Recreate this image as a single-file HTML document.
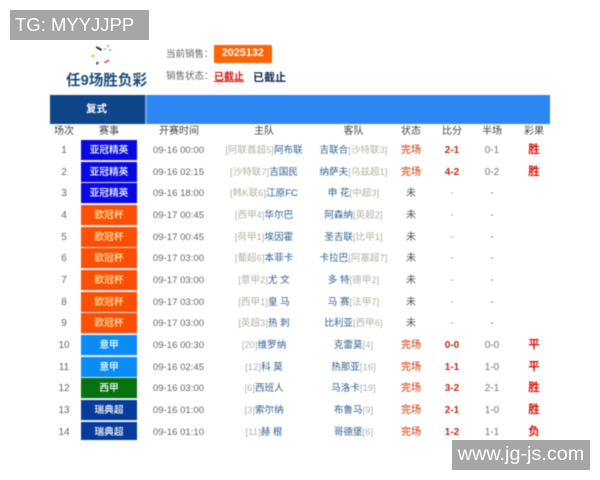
<!DOCTYPE html>
<html lang="zh"><head><meta charset="utf-8"><style>
*{box-sizing:border-box}
html,body{margin:0;padding:0;background:#fff}
body{width:600px;height:480px;position:relative;overflow:hidden;font-family:"Liberation Sans","Noto Sans CJK SC",sans-serif;font-size:10px;color:#555}
.a{position:absolute;white-space:nowrap}
#w{position:absolute;left:0;top:0;width:600px;height:480px;filter:blur(.4px)}
.r{position:absolute;left:50px;width:500px;height:21.67px;line-height:21.67px}
.r span{position:absolute;top:0;text-align:center;white-space:nowrap}
.n{left:0;width:28px;color:#666}
.l{left:31px;width:56px;height:21px;line-height:21px;color:#fff;border-bottom:1px solid #dde;font-size:9.7px;font-weight:500}
.t{left:100.5px;width:56px;font-size:9.6px;color:#666}
.h{left:160px;width:108px;font-size:9.55px}
.g{left:248.5px;width:110px;font-size:9.55px}
.s{left:339px;width:44px}
.c{left:382px;width:40px;font-weight:bold;color:#c22a10}
.b{left:422px;width:40px;color:#777}
.e{left:464px;width:40px;font-weight:bold;color:#d8140c;font-size:11.5px}
i{font-style:normal;color:#b3b3a6}
b{font-weight:normal;color:#2f5f8f}
.f{color:#d8501f;font-weight:500}
.blue{background:#0a0ae0}.or{background:#fb4f05;color:#ffe9a8!important}.sky{background:#0a8cf5}.gr{background:#06710f}.nv{background:#053c9c}
</style></head><body>
<div id="w">
<svg class="a" style="left:88px;top:42px" width="28" height="28" viewBox="0 0 28 28"><path d="M8 4l6 3-1 2-5-3z" fill="#333"/><circle cx="20" cy="4" r="1.5" fill="#ccc"/><circle cx="17" cy="7" r="1" fill="#aaa"/><circle cx="22" cy="8" r="1" fill="#999"/><circle cx="5" cy="14" r="1.6" fill="#f0d050"/><path d="M16 20l5-2.2.7 1-5 2.4z" fill="#e02a20"/><path d="M8 20h3l-2 3.5z" fill="#1a3fb0"/><circle cx="12" cy="14" r=".9" fill="#ddd"/></svg>
<div class="a" style="left:66px;top:72px;font-size:14.6px;line-height:18px;font-weight:bold;color:#1c4b78">任9场胜负彩</div>
<div class="a" style="left:166px;top:47.5px;font-size:9.5px;line-height:14px;color:#666">当前销售：</div>
<div class="a" style="left:213.5px;top:45px;width:58.5px;height:18px;line-height:17.5px;background:#fc6405;color:#fff;font-size:10.8px;font-weight:bold;text-align:center;border-radius:1px">2025132</div>
<div class="a" style="left:166px;top:70px;font-size:9.5px;line-height:14px;color:#666">销售状态：</div>
<div class="a" style="left:214px;top:70.5px;font-size:10px;line-height:14px;font-weight:bold;color:#d8140c;text-decoration:underline">已截止</div>
<div class="a" style="left:253px;top:70.5px;font-size:11px;line-height:14px;font-weight:bold;color:#14284f">已截止</div>

<div class="a" style="left:50px;top:94.5px;width:500px;height:29px;background:#2c87f5"></div>
<div class="a" style="left:50px;top:94.5px;width:95px;height:29px;background:#0f4589;color:#fff;font-weight:bold;font-size:10.5px;line-height:29px;text-align:center;padding-right:2px">复式</div>
<div class="a" style="left:145px;top:94.5px;width:1.5px;height:29px;background:#6fa8ee"></div>

<div class="r" style="top:120.5px;color:#444;line-height:22px">
<span style="left:0;width:28px">场次</span><span style="left:31px;width:56px">赛事</span><span style="left:101px;width:56px">开赛时间</span><span style="left:185px;width:58px">主队</span><span style="left:274.5px;width:58px">客队</span><span class="s">状态</span><span style="left:382px;width:40px">比分</span><span style="left:422px;width:40px">半场</span><span style="left:464px;width:40px">彩果</span></div>

<div class="r" style="top:140px"><span class="n">1</span><span class="l blue">亚冠精英</span><span class="t">09-16 00:00</span><span class="h"><i>[阿联酋超5]</i><b>阿布联</b></span><span class="g"><b>吉联合</b><i>[沙特联3]</i></span><span class="s f">完场</span><span class="c">2-1</span><span class="b">0-1</span><span class="e">胜</span></div>
<div class="r" style="top:161.67px"><span class="n">2</span><span class="l blue">亚冠精英</span><span class="t">09-16 02:15</span><span class="h"><i>[沙特联7]</i><b>吉国民</b></span><span class="g"><b>纳萨夫</b><i>[乌兹超1]</i></span><span class="s f">完场</span><span class="c">4-2</span><span class="b">0-2</span><span class="e">胜</span></div>
<div class="r" style="top:183.33px"><span class="n">3</span><span class="l blue">亚冠精英</span><span class="t">09-16 18:00</span><span class="h"><i>[韩K联6]</i><b>江原FC</b></span><span class="g"><b>申 花</b><i>[中超3]</i></span><span class="s">未</span><span class="c" style="font-weight:normal;color:#a98">-</span><span class="b">-</span></div>
<div class="r" style="top:205px"><span class="n">4</span><span class="l or">欧冠杯</span><span class="t">09-17 00:45</span><span class="h"><i>[西甲4]</i><b>华尔巴</b></span><span class="g"><b>阿森纳</b><i>[英超2]</i></span><span class="s">未</span><span class="c" style="font-weight:normal;color:#a98">-</span><span class="b">-</span></div>
<div class="r" style="top:226.67px"><span class="n">5</span><span class="l or">欧冠杯</span><span class="t">09-17 00:45</span><span class="h"><i>[荷甲1]</i><b>埃因霍</b></span><span class="g"><b>圣吉联</b><i>[比甲1]</i></span><span class="s">未</span><span class="c" style="font-weight:normal;color:#a98">-</span><span class="b">-</span></div>
<div class="r" style="top:248.33px"><span class="n">6</span><span class="l or">欧冠杯</span><span class="t">09-17 03:00</span><span class="h"><i>[葡超6]</i><b>本菲卡</b></span><span class="g"><b>卡拉巴</b><i>[阿塞超7]</i></span><span class="s">未</span><span class="c" style="font-weight:normal;color:#a98">-</span><span class="b">-</span></div>
<div class="r" style="top:270px"><span class="n">7</span><span class="l or">欧冠杯</span><span class="t">09-17 03:00</span><span class="h"><i>[意甲2]</i><b>尤 文</b></span><span class="g"><b>多 特</b><i>[德甲2]</i></span><span class="s">未</span><span class="c" style="font-weight:normal;color:#a98">-</span><span class="b">-</span></div>
<div class="r" style="top:291.67px"><span class="n">8</span><span class="l or">欧冠杯</span><span class="t">09-17 03:00</span><span class="h"><i>[西甲1]</i><b>皇 马</b></span><span class="g"><b>马 赛</b><i>[法甲7]</i></span><span class="s">未</span><span class="c" style="font-weight:normal;color:#a98">-</span><span class="b">-</span></div>
<div class="r" style="top:313.33px"><span class="n">9</span><span class="l or">欧冠杯</span><span class="t">09-17 03:00</span><span class="h"><i>[英超3]</i><b>热 刺</b></span><span class="g"><b>比利亚</b><i>[西甲6]</i></span><span class="s">未</span><span class="c" style="font-weight:normal;color:#a98">-</span><span class="b">-</span></div>
<div class="r" style="top:335px"><span class="n">10</span><span class="l sky">意甲</span><span class="t">09-16 00:30</span><span class="h"><i>[20]</i><b>维罗纳</b></span><span class="g"><b>克雷莫</b><i>[4]</i></span><span class="s f">完场</span><span class="c">0-0</span><span class="b">0-0</span><span class="e">平</span></div>
<div class="r" style="top:356.67px"><span class="n">11</span><span class="l sky">意甲</span><span class="t">09-16 02:45</span><span class="h"><i>[12]</i><b>科 莫</b></span><span class="g"><b>热那亚</b><i>[16]</i></span><span class="s f">完场</span><span class="c">1-1</span><span class="b">1-0</span><span class="e">平</span></div>
<div class="r" style="top:378.33px"><span class="n">12</span><span class="l gr">西甲</span><span class="t">09-16 03:00</span><span class="h"><i>[6]</i><b>西班人</b></span><span class="g"><b>马洛卡</b><i>[19]</i></span><span class="s f">完场</span><span class="c">3-2</span><span class="b">2-1</span><span class="e">胜</span></div>
<div class="r" style="top:400px"><span class="n">13</span><span class="l nv">瑞典超</span><span class="t">09-16 01:00</span><span class="h"><i>[3]</i><b>索尔纳</b></span><span class="g"><b>布鲁马</b><i>[9]</i></span><span class="s f">完场</span><span class="c">2-1</span><span class="b">1-0</span><span class="e">胜</span></div>
<div class="r" style="top:421.67px"><span class="n">14</span><span class="l nv" style="height:18.5px;border:0">瑞典超</span><span class="t">09-16 01:10</span><span class="h"><i>[11]</i><b>赫 根</b></span><span class="g"><b>哥德堡</b><i>[6]</i></span><span class="s f">完场</span><span class="c">1-2</span><span class="b">1-1</span><span class="e">负</span></div>
</div>
<div class="a" style="left:10px;top:10px;width:139px;height:30px;background:#a6a6a6;color:#fff;font-size:18.5px;line-height:30px;padding-left:5px">TG: MYYJJPP</div>
<div class="a" style="left:452px;top:440px;width:138px;height:30px;background:#a6a6a6;color:#fff;font-size:19.8px;line-height:29px;text-align:center">www.jg-js.com</div>
</body></html>
